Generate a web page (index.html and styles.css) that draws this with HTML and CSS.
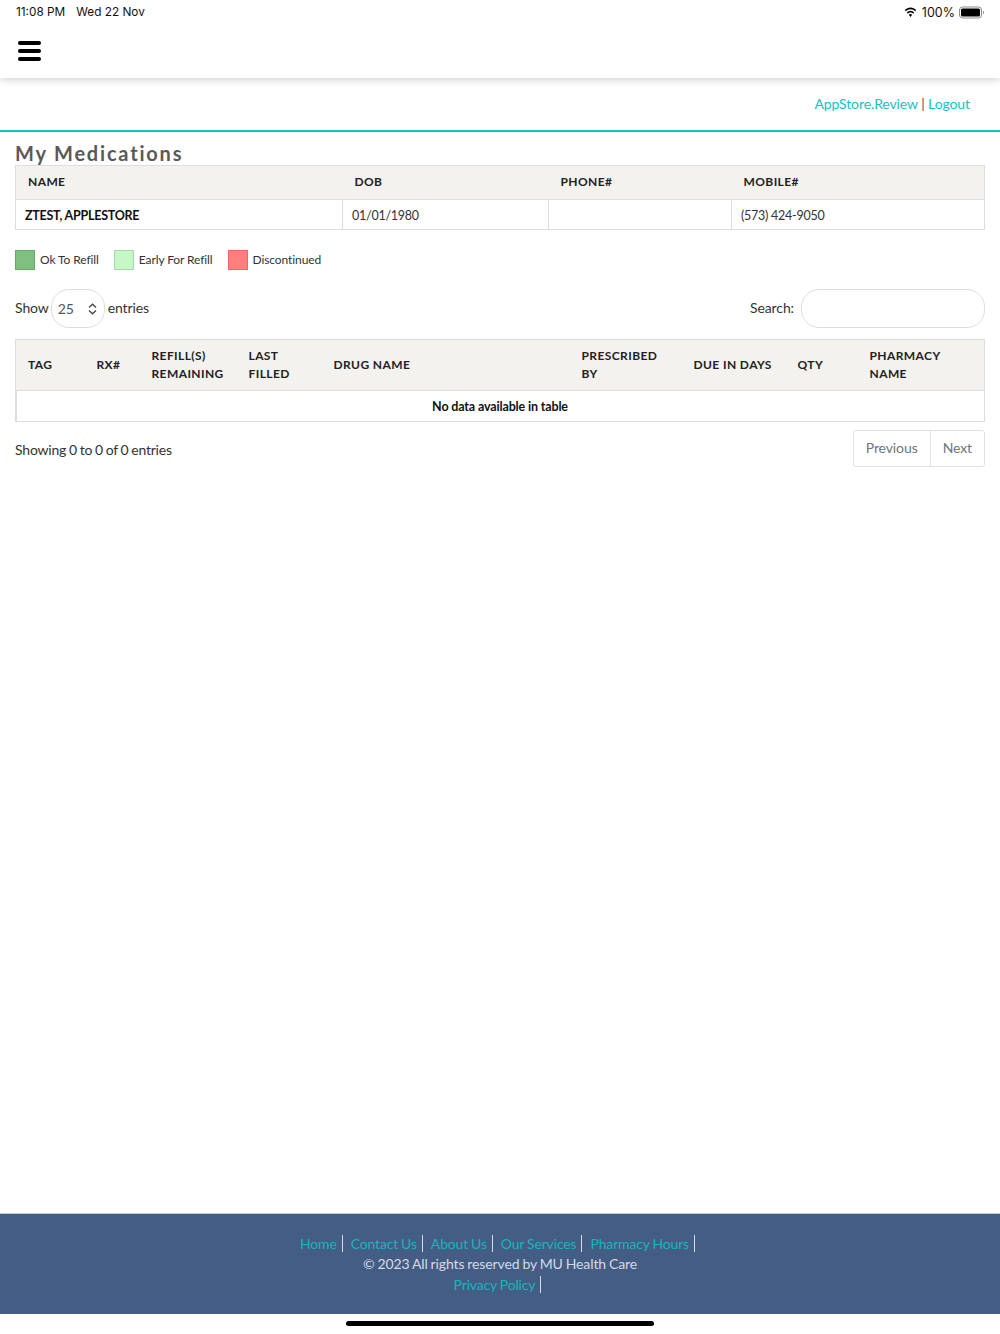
FILE: index.html
```html
<!DOCTYPE html>
<html lang="en">
<head>
<meta charset="utf-8">
<title>My Medications</title>
<link rel="stylesheet" href="styles.css">
</head>
<body>
<div class="page">
  <header class="topbar">
    <div class="status">
      <div class="status-left"><span>11:08 PM</span><span>Wed 22 Nov</span></div>
      <div class="status-right">
        <svg class="wifi" width="13" height="11" viewBox="0 0 15 11" preserveAspectRatio="none"><path d="M7.5 2.2c2.1 0 4 .8 5.4 2.1l1.1-1.2C12.300 1.500 10 .5 7.500.5S2.700 1.500 1 3.100l1.100 1.200C3.500 3 5.400 2.200 7.500 2.200z"/><path d="M7.500 5.500c1.200 0 2.300.5 3.100 1.200l1.100-1.200C10.600 4.500 9.100 3.800 7.500 3.800s-3.100.7-4.200 1.700l1.100 1.200c.8-.7 1.900-1.200 3.100-1.200z"/><path d="M7.500 7.100c-.8 0-1.400.3-1.900.7l1.900 2.200 1.900-2.200c-.5-.4-1.100-.7-1.900-.7z"/></svg>
        <span>100%</span>
        <svg class="battery" width="26" height="13" viewBox="0 0 26 13"><rect x=".5" y="1" width="22" height="11" rx="3" fill="none" stroke="#8a8a8a"/><rect x="2" y="2.500" width="19" height="8" rx="1.500"/><path d="M24 4.800c.7.200 1 .9 1 1.700s-.3 1.500-1 1.700z" fill="#8a8a8a"/></svg>
      </div>
    </div>
    <div class="nav">
      <svg class="burger" width="23" height="20" viewBox="0 0 23 20"><rect width="23" height="4" rx="2"/><rect y="8" width="23" height="4" rx="2"/><rect y="16" width="23" height="4" rx="2"/></svg>
    </div>
  </header>
  <div class="userlinks"><a href="#">AppStore.Review</a> | <a href="#">Logout</a></div>
  <main class="content">
    <h1 class="title">My Medications</h1>
    <table class="patient">
      <thead><tr><th class="p1">NAME</th><th class="p2">DOB</th><th class="p3">PHONE#</th><th>MOBILE#</th></tr></thead>
      <tbody><tr><td class="pname">ZTEST, APPLESTORE</td><td>01/01/1980</td><td></td><td>(573) 424-9050</td></tr></tbody>
    </table>
    <div class="legend">
      <span class="swatch ok"></span><span class="legend-label">Ok To Refill</span>
      <span class="swatch early"></span><span class="legend-label">Early For Refill</span>
      <span class="swatch disc"></span><span class="legend-label">Discontinued</span>
    </div>
    <div class="controls">
      <div class="length"><span class="lbl">Show</span>
        <span class="select">25
          <svg width="9" height="12" viewBox="0 0 9 12"><path d="M1 4.500 4.500 1.200 8 4.500M1 7.500l3.500 3.300L8 7.500" fill="none" stroke="#444" stroke-width="1.300"/></svg>
        </span>
        <span class="lbl">entries</span></div>
      <div class="search"><label class="lbl" for="q">Search:</label><input id="q" type="text"></div>
    </div>
    <table class="meds">
      <thead>
        <tr>
          <th class="c1">TAG</th><th class="c2">RX#</th><th class="c3">REFILL(S) REMAINING</th><th class="c4">LAST FILLED</th><th class="c5">DRUG NAME</th><th class="c6">PRESCRIBED BY</th><th class="c7">DUE IN DAYS</th><th class="c8">QTY</th><th class="c9">PHARMACY NAME</th>
        </tr>
      </thead>
      <tbody><tr><td colspan="9" class="empty">No data available in table</td></tr></tbody>
    </table>
    <div class="tablefoot">
      <div class="info">Showing 0 to 0 of 0 entries</div>
      <div class="pager"><a href="#">Previous</a><a href="#">Next</a></div>
    </div>
  </main>
  <footer class="footer">
    <div class="fline"><a href="#">Home</a><a href="#">Contact Us</a><a href="#">About Us</a><a href="#">Our Services</a><a href="#">Pharmacy Hours</a></div>
    <div class="copy">© 2023 All rights reserved by MU Health Care</div>
    <div class="fline"><a href="#">Privacy Policy</a></div>
  </footer>
  <div class="homezone"><span class="homebar"></span></div>
</div>
</body>
</html>
```
FILE: styles.css
```css
* { box-sizing: border-box; }
html, body { margin: 0; padding: 0; }
body { font-family: Lato, "Open Sans", sans-serif; color: #333; background: #fff; }
.page { width: 1000px; height: 1334px; display: flex; flex-direction: column; overflow: hidden; }
a { color: #17c1c6; text-decoration: none; }

.topbar { height: 78px; background: #fff; box-shadow: 0 1px 8px rgba(0,0,0,.22); position: relative; }
.status { height: 24px; padding: 0 15px 0 16px; display: flex; justify-content: space-between; align-items: center; font-family: Inter, "Liberation Sans", sans-serif; font-size: 12.500px; color: #111; }
.status-left { display: flex; gap: 11px; font-size: 11.800px; }
.status-right { display: flex; align-items: center; gap: 4px; }
.wifi { margin-right: 1px; }
.nav { padding: 17px 0 0 18px; }
.burger { display: block; }

.userlinks { height: 52px; padding: 16px 30px 0 0; text-align: right; font-size: 14px; letter-spacing: -.1px; line-height: 20px; color: #555; }

.content { flex: 1; border-top: 2px solid #17c1c6; padding: 0 15px; }
.title { margin: 9px 0 0; font-size: 20px; line-height: 24px; font-weight: 700; letter-spacing: 1.800px; color: #595959; }

table { width: 100%; border-collapse: collapse; table-layout: fixed; }
th { background: #f3f2ef; font-size: 12px; font-weight: 700; letter-spacing: .4px; color: #222; text-align: left; }
.patient { border: 1px solid #ddd; }
.patient th { height: 34px; padding: 0 12px 2px; border-bottom: 1px solid #ddd; }
.patient td { height: 30px; padding: 1px 9px 0; border-left: 1px solid #ddd; font-size: 12.500px; letter-spacing: -.25px; color: #333; }
.patient td:first-child { border-left: 0; }
.patient .pname { font-weight: 700; color: #111; }
.p1 { width: 327px; }
.p2 { width: 206px; }
.p3 { width: 183px; }

.legend { display: flex; align-items: center; margin-top: 20px; height: 20px; font-size: 12px; letter-spacing: -.1px; color: #333; }
.swatch { width: 20px; height: 20px; border: 1px solid; margin-right: 5px; }
.legend-label { margin-right: 15px; padding-bottom: 2px; }
.ok { background: #7fbf7f; border-color: #6aa86a; }
.early { background: #c6f7c6; border-color: #a5d6a5; }
.disc { background: #ff7f7f; border-color: #e66; }

.controls { display: flex; justify-content: space-between; align-items: center; margin-top: 19px; height: 39px; font-size: 14px; color: #333; }
.lbl { padding-bottom: 2px; letter-spacing: -.1px; }
.length { display: flex; align-items: center; gap: 2px; }
.select { width: 54px; height: 39px; margin-right: 1px; border: 1px solid #ddd; border-radius: 18px; display: flex; align-items: center; justify-content: space-between; padding: 0 7px 0 6px; color: #555; }
.search { display: flex; align-items: center; gap: 7px; }
.search input { width: 184px; height: 39px; border: 1px solid #ddd; border-radius: 18px; background: #fff; }

.meds { margin-top: 11px; border: 1px solid #ddd; }
.meds th { height: 51px; padding: 0 12px; line-height: 18px; border-bottom: 1px solid #ddd; }
.empty { height: 31px; padding-top: 1px; text-align: center; font-size: 12.500px; letter-spacing: -.15px; font-weight: 700; color: #111; box-shadow: inset 1px 0 0 #ddd; }
.c1 { width: 69px; }
.c2 { width: 55px; }
.c3 { width: 97px; }
.c4 { width: 85px; }
.c5 { width: 248px; }
.c6 { width: 112px; }
.c7 { width: 104px; }
.c8 { width: 72px; }

.tablefoot { display: flex; justify-content: space-between; align-items: flex-start; margin-top: 8px; font-size: 14px; color: #333; }
.info { padding-top: 11px; letter-spacing: -.2px; word-spacing: -.6px; }
.pager { display: flex; border: 1px solid #dee2e6; border-radius: 3px; height: 37px; letter-spacing: -.1px; }
.pager a { padding: 0 12px; line-height: 34px; color: #6c757d; }
.pager a + a { border-left: 1px solid #dee2e6; }

.footer { height: 101px; background: #445d85; border-top: 1px solid #c5cbd6; padding-top: 19px; text-align: center; font-size: 14px; line-height: 20.500px; color: #d5dae3; }
.fline { height: 20.500px; }
.copy { letter-spacing: -.1px; word-spacing: -.6px; }
.footer a { color: #17b5bb; display: inline-block; vertical-align: -1px; line-height: 17px; letter-spacing: -.15px; word-spacing: -.5px; padding-right: 5px; border-right: 1px solid #d5dae3; margin-right: 8px; }
.fline a:last-child { margin-right: 5px; }
.homezone { height: 20px; display: flex; justify-content: center; padding-top: 7px; }
.homebar { width: 308px; height: 5px; border-radius: 3px; background: #000; }
```
